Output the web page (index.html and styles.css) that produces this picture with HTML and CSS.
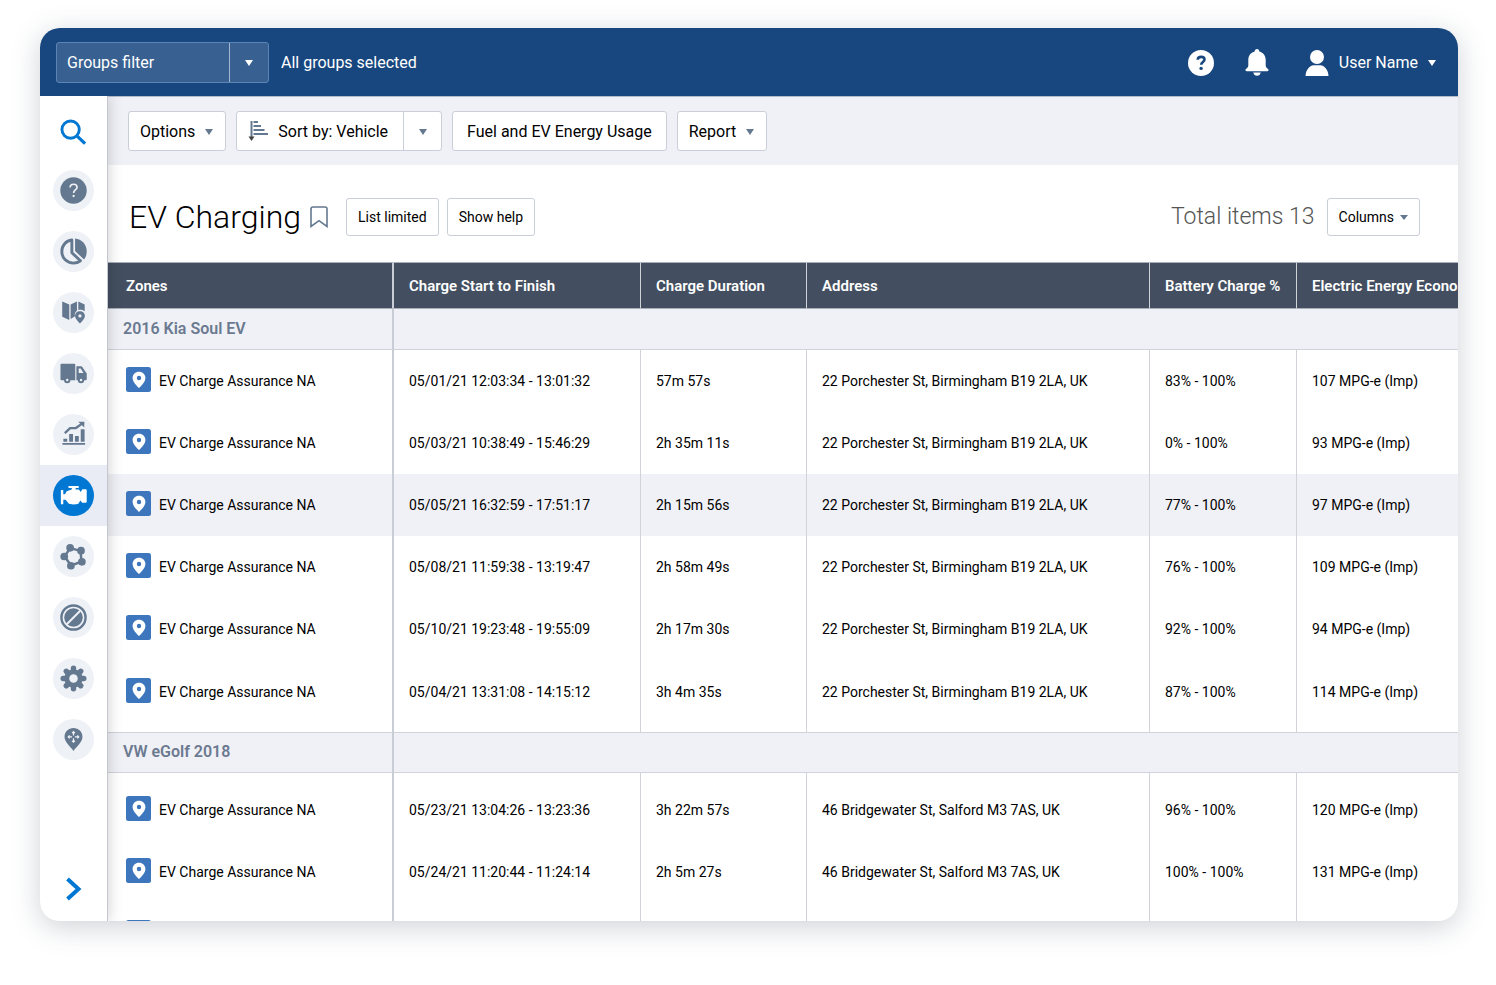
FILE: index.html
```html
<!DOCTYPE html>
<html lang="en">

<head>
    <meta charset="UTF-8">
    <meta name="viewport" content="width=device-width, initial-scale=1.0">
    <title>EV Charging</title>
    <link rel="stylesheet" href="styles.css">
</head>

<body>
    <!-- shared icon -->
    <svg class="symbols" aria-hidden="true">
        <symbol id="pin" viewBox="0 0 25 25">
            <rect width="25" height="25" rx="2.5" fill="#3d76bd"/>
            <path fill="#fff" fill-rule="evenodd" d="M13 4.800c-3.600 0-6.400 2.700-6.400 6.100 0 3.600 3.400 7 6.400 10.100 3-3.100 6.400-6.500 6.400-10.100 0-3.400-2.800-6.100-6.400-6.100zm0 4a2.200 2.200 0 1 1 0 4.400 2.200 2.200 0 0 1 0-4.400z"/>
        </symbol>
    </svg>

    <div class="window">
        <header class="topbar">
            <div class="groups-filter">
                <input type="text" placeholder="Groups filter" aria-label="Groups filter">
                <button type="button" aria-label="Open groups filter"><span class="caret"></span></button>
            </div>
            <span class="groups-status">All groups selected</span>
            <div class="topbar-actions">
                <button type="button" class="icon-button" aria-label="Help">
                    <svg width="26" height="26" viewBox="0 0 26 26">
                        <circle cx="13" cy="13" r="13" fill="#fff"/>
                        <path d="M9.700 9.800c.1-1.900 1.500-2.900 3.400-2.900 2 0 3.400 1 3.400 2.700 0 2.400-3.300 2.400-3.300 5.100" fill="none" stroke="#17477e" stroke-width="2.600"/>
                        <circle cx="13.100" cy="18.400" r="1.700" fill="#17477e"/>
                    </svg>
                </button>
                <button type="button" class="icon-button" aria-label="Notifications">
                    <svg width="24" height="28" viewBox="0 0 24 28" fill="#fff">
                        <path d="M12 0c1.400 0 2.300 1 2.300 2.400C18.300 3.400 20.700 6.500 20.700 11v5.500c0 2.500 2.900 3.200 2.900 4.600 0 .7-.5 1.100-1.200 1.100H1.600c-.7 0-1.200-.4-1.200-1.100 0-1.400 2.900-2.100 2.900-4.600V11C3.300 6.500 5.700 3.400 9.700 2.400 9.700 1 10.600 0 12 0z"/>
                        <path d="M8.200 23.500h7.600c-.5 2-1.900 3.300-3.800 3.300s-3.300-1.300-3.800-3.300z"/>
                    </svg>
                </button>
                <button type="button" class="user-button">
                    <svg width="24" height="26" viewBox="0 0 24 26" fill="#fff">
                        <circle cx="12" cy="7" r="7"/>
                        <path d="M.5 26c.3-6.600 4.600-10.700 8-10.700h7c3.400 0 7.700 4.100 8 10.700z"/>
                    </svg>
                    User Name
                    <span class="caret"></span>
                </button>
            </div>
        </header>

        <nav class="sidebar">
            <a href="#" class="search" aria-label="Search">
                <svg width="27" height="27" viewBox="0 0 28 28" fill="none" stroke="#0078d3" stroke-width="3">
                    <circle cx="11" cy="11" r="9"/>
                    <path d="M17.500 17.500l8.500 8" stroke-width="3.400"/>
                </svg>
            </a>
            <a href="#" class="nav-item" aria-label="Help">
                <span class="nav-icon"><svg width="27" height="27" viewBox="0 0 28 28">
                    <circle cx="14" cy="14" r="13.700" fill="#64788f"/>
                    <path d="M10.500 11c0-2.200 1.400-3.500 3.600-3.500s3.600 1.200 3.600 3.100c0 2.700-3.600 2.900-3.600 5.900" fill="none" stroke="#eef1f6" stroke-width="1.700"/>
                    <circle cx="14.100" cy="19.700" r="1.200" fill="#eef1f6"/>
                </svg></span>
            </a>
            <a href="#" class="nav-item" aria-label="Dashboard">
                <span class="nav-icon"><svg width="27" height="27" viewBox="0 0 28 28">
                    <path d="M12.300 2.100C6.200 2.800 1.900 7.700 1.900 14c0 6.900 5.400 12 12.100 12 2.800 0 5.300-.9 7.200-2.400l-8.900-8.300z" fill="none" stroke="#64788f" stroke-width="3" stroke-linejoin="round"/>
                    <path d="M15.600.6c6.900.6 12.100 6.200 12.100 13.200 0 3.400-1 6.100-2.800 8.400l-9.300-8.600z" fill="#64788f"/>
                </svg></span>
            </a>
            <a href="#" class="nav-item" aria-label="Map">
                <span class="nav-icon"><svg width="27" height="27" viewBox="0 0 28 28" fill="#64788f">
                    <path d="M2.300 2.600l7.300 3.200v16l-7.300-3.300zM11 5.800l6.600-3.200v9.600c-2 1.200-2.800 3.500-2 5.800L11 20.800zM19 2.600l6.600 3v7.200c-1.600-1.600-4.200-2.200-6.600-1.300z"/>
                    <path fill-rule="evenodd" d="M20.700 12.700c-3 0-5.100 2.100-5.100 4.800 0 3 2.800 5 5.100 7.900 2.300-2.900 5.100-4.900 5.100-7.900 0-2.700-2.100-4.800-5.100-4.800zm0 3.100a1.700 1.700 0 1 1 0 3.400 1.700 1.700 0 0 1 0-3.400z"/>
                </svg></span>
            </a>
            <a href="#" class="nav-item" aria-label="Vehicles">
                <span class="nav-icon"><svg width="27" height="27" viewBox="0 0 28 28">
                    <path d="M1.500 4h13.300c.6 0 1 .4 1 1v16H1.500c-.6 0-1-.4-1-1V5c0-.6.4-1 1-1z" fill="#64788f"/>
                    <path d="M17 6.500h4.600c.8 0 1.300.4 1.700 1l4.400 6.600V20c0 .6-.4 1-1 1H17z" fill="#64788f"/>
                    <path d="M19.400 8.700h2l3 4.800h-5z" fill="#eef1f6"/>
                    <g fill="#eef1f6" stroke="#64788f" stroke-width="2">
                        <circle cx="7.500" cy="20.700" r="2.300"/>
                        <circle cx="21.800" cy="20.700" r="2.300"/>
                    </g>
                </svg></span>
            </a>
            <a href="#" class="nav-item" aria-label="Activity">
                <span class="nav-icon"><svg width="27" height="27" viewBox="0 0 28 28" fill="#64788f">
                    <path d="M3.500 18.500h4v3h-4zM9.500 13.500h4v8h-4zM15.500 15.500h4v6h-4zM21.500 8.500h4v13h-4zM2.500 22.700h23.500v2H2.500z"/>
                    <path d="M5 12.500l5.500-5.200h6l6-4.300" fill="none" stroke="#64788f" stroke-width="2.400"/>
                    <path d="M19 .7l6.300 0-.2 6z"/>
                </svg></span>
            </a>
            <a href="#" class="nav-item active" aria-label="Engine and maintenance">
                <span class="nav-icon"><svg width="27" height="27" viewBox="0 0 28 28" fill="#fff">
                    <path d="M8.800 4.200h10.600v2.100h-3.200v1.500h3.300l2.100 2.500 1.500-2.900h3.700c.5 0 .9.400.9.900v12.200c0 .5-.4.900-.9.900H23l-1.800-2.300-2.400 3.600-5 .7-4.600-.9-3.400-4.200H3.400v4.700H.9V8.200h2.500v4.600h1.800l1.700-3.300 5.300-1.600V6.300H8.800z"/>
                </svg></span>
            </a>
            <a href="#" class="nav-item" aria-label="Zones and messages">
                <span class="nav-icon"><svg width="27" height="27" viewBox="0 0 28 28" fill="#64788f">
                    <path d="M10.500 5.300l10.800 2.900 1 11.100-10.800 4L4.700 14z" fill="none" stroke="#64788f" stroke-width="2.600"/>
                    <circle cx="10.500" cy="5" r="4"/>
                    <circle cx="21.800" cy="8" r="4"/>
                    <circle cx="22.700" cy="19.500" r="4"/>
                    <circle cx="11.300" cy="23.600" r="4"/>
                    <circle cx="4.400" cy="14" r="4"/>
                </svg></span>
            </a>
            <a href="#" class="nav-item" aria-label="Rules">
                <span class="nav-icon"><svg width="27" height="27" viewBox="0 0 28 28">
                    <circle cx="14" cy="14" r="12.500" fill="none" stroke="#64788f" stroke-width="2.500"/>
                    <circle cx="14" cy="14" r="9.600" fill="#64788f"/>
                    <path d="M7 21L21 7" stroke="#eef1f6" stroke-width="2"/>
                </svg></span>
            </a>
            <a href="#" class="nav-item" aria-label="Administration">
                <span class="nav-icon"><svg width="27" height="27" viewBox="0 0 28 28">
                    <g stroke="#64788f" stroke-width="5.600" stroke-linecap="round">
                        <path d="M14 3.300v21.400M3.300 14h21.400M6.500 6.500l15 15M21.500 6.500l-15 15"/>
                    </g>
                    <circle cx="14" cy="14" r="9.500" fill="#64788f"/>
                    <circle cx="14" cy="14" r="4.400" fill="#eef1f6"/>
                </svg></span>
            </a>
            <a href="#" class="nav-item" aria-label="Places">
                <span class="nav-icon"><svg width="27" height="27" viewBox="0 0 28 28">
                    <path d="M14 2.200c-5.200 0-9.300 3.900-9.300 9 0 5.500 5.700 9.600 9.300 14.700 3.600-5.100 9.300-9.200 9.300-14.700 0-5.100-4.100-9-9.300-9z" fill="#64788f"/>
                    <path d="M14 6v3.800M14 12.800v3.800M8.700 11.300h3.800M15.500 11.300h3.800M12.500 7.300L14 5.800l1.500 1.500M12.500 15.300l1.500 1.500 1.500-1.500M10 9.800l-1.500 1.500 1.500 1.500M18 9.800l1.500 1.500-1.500 1.500" fill="none" stroke="#eef1f6" stroke-width="1.200"/>
                </svg></span>
            </a>
            <button type="button" class="expand" aria-label="Expand menu">
                <svg width="16" height="24" viewBox="0 0 16 24" fill="none" stroke="#0078d3" stroke-width="4">
                    <path d="M1.500 2l11 10-11 10"/>
                </svg>
            </button>
        </nav>

        <main class="content">
            <div class="toolbar">
                <button type="button" class="btn">Options <span class="caret"></span></button>
                <div class="split-button">
                    <button type="button" class="btn">
                        <svg width="20" height="22" viewBox="0 0 20 22">
                            <path d="M3.500 1v16" stroke="#64788f" stroke-width="2"/>
                            <path d="M.5 16.500h6L3.500 21z" fill="#444"/>
                            <path d="M5.500 2h4.500M5.500 6h7.500M5.500 10h11M5.500 14h14.500" stroke="#64788f" stroke-width="2"/>
                        </svg>
                        Sort by: Vehicle
                    </button>
                    <button type="button" class="btn split-toggle" aria-label="Choose sort order"><span class="caret"></span></button>
                </div>
                <button type="button" class="btn wide">Fuel and EV Energy Usage</button>
                <button type="button" class="btn">Report <span class="caret"></span></button>
            </div>

            <div class="title-row">
                <h1>EV Charging</h1>
                <button type="button" class="icon-button bookmark" aria-label="Bookmark this page">
                    <svg width="18" height="22" viewBox="0 0 18 22" fill="none" stroke="#64788f" stroke-width="1.600">
                        <path d="M1 20.500V3c0-1.200.9-2 2-2h12c1.100 0 2 .8 2 2v17.500l-8-5.800z"/>
                    </svg>
                </button>
                <button type="button" class="btn small">List limited</button>
                <button type="button" class="btn small">Show help</button>
                <span class="total">Total items 13</span>
                <button type="button" class="btn small columns">Columns <span class="caret"></span></button>
            </div>

            <div class="table-wrap">
                <table>
                    <colgroup>
                        <col class="col-zones">
                        <col class="col-period">
                        <col class="col-duration">
                        <col class="col-address">
                        <col class="col-battery">
                        <col>
                    </colgroup>
                    <thead>
                        <tr>
                            <th scope="col">Zones</th>
                            <th scope="col">Charge Start to Finish</th>
                            <th scope="col">Charge Duration</th>
                            <th scope="col">Address</th>
                            <th scope="col">Battery Charge %</th>
                            <th scope="col">Electric Energy Economy</th>
                        </tr>
                    </thead>
                    <tbody>
                        <tr class="group">
                            <th scope="rowgroup">2016 Kia Soul EV</th>
                            <td colspan="5"></td>
                        </tr>
                        <tr>
                            <td><svg class="pin"><use href="#pin"/></svg>EV Charge Assurance NA</td>
                            <td>05/01/21 12:03:34 - 13:01:32</td>
                            <td>57m 57s</td>
                            <td>22 Porchester St, Birmingham B19 2LA, UK</td>
                            <td>83% - 100%</td>
                            <td>107 MPG-e (Imp)</td>
                        </tr>
                        <tr>
                            <td><svg class="pin"><use href="#pin"/></svg>EV Charge Assurance NA</td>
                            <td>05/03/21 10:38:49 - 15:46:29</td>
                            <td>2h 35m 11s</td>
                            <td>22 Porchester St, Birmingham B19 2LA, UK</td>
                            <td>0% - 100%</td>
                            <td>93 MPG-e (Imp)</td>
                        </tr>
                        <tr class="highlight">
                            <td><svg class="pin"><use href="#pin"/></svg>EV Charge Assurance NA</td>
                            <td>05/05/21 16:32:59 - 17:51:17</td>
                            <td>2h 15m 56s</td>
                            <td>22 Porchester St, Birmingham B19 2LA, UK</td>
                            <td>77% - 100%</td>
                            <td>97 MPG-e (Imp)</td>
                        </tr>
                        <tr>
                            <td><svg class="pin"><use href="#pin"/></svg>EV Charge Assurance NA</td>
                            <td>05/08/21 11:59:38 - 13:19:47</td>
                            <td>2h 58m 49s</td>
                            <td>22 Porchester St, Birmingham B19 2LA, UK</td>
                            <td>76% - 100%</td>
                            <td>109 MPG-e (Imp)</td>
                        </tr>
                        <tr>
                            <td><svg class="pin"><use href="#pin"/></svg>EV Charge Assurance NA</td>
                            <td>05/10/21 19:23:48 - 19:55:09</td>
                            <td>2h 17m 30s</td>
                            <td>22 Porchester St, Birmingham B19 2LA, UK</td>
                            <td>92% - 100%</td>
                            <td>94 MPG-e (Imp)</td>
                        </tr>
                        <tr class="last">
                            <td><svg class="pin"><use href="#pin"/></svg>EV Charge Assurance NA</td>
                            <td>05/04/21 13:31:08 - 14:15:12</td>
                            <td>3h 4m 35s</td>
                            <td>22 Porchester St, Birmingham B19 2LA, UK</td>
                            <td>87% - 100%</td>
                            <td>114 MPG-e (Imp)</td>
                        </tr>
                    </tbody>
                    <tbody>
                        <tr class="group">
                            <th scope="rowgroup">VW eGolf 2018</th>
                            <td colspan="5"></td>
                        </tr>
                        <tr class="first">
                            <td><svg class="pin"><use href="#pin"/></svg>EV Charge Assurance NA</td>
                            <td>05/23/21 13:04:26 - 13:23:36</td>
                            <td>3h 22m 57s</td>
                            <td>46 Bridgewater St, Salford M3 7AS, UK</td>
                            <td>96% - 100%</td>
                            <td>120 MPG-e (Imp)</td>
                        </tr>
                        <tr>
                            <td><svg class="pin"><use href="#pin"/></svg>EV Charge Assurance NA</td>
                            <td>05/24/21 11:20:44 - 11:24:14</td>
                            <td>2h 5m 27s</td>
                            <td>46 Bridgewater St, Salford M3 7AS, UK</td>
                            <td>100% - 100%</td>
                            <td>131 MPG-e (Imp)</td>
                        </tr>
                        <tr>
                            <td><svg class="pin"><use href="#pin"/></svg></td>
                            <td></td>
                            <td></td>
                            <td></td>
                            <td></td>
                            <td></td>
                        </tr>
                    </tbody>
                </table>
            </div>
        </main>
    </div>
</body>

</html>
```
FILE: styles.css
```css
* {
    box-sizing: border-box;
}

body {
    margin: 0;
    padding: 28px 38px 64px 40px;
    height: 100vh;
    background-color: #fff;
    color: #000;
    font-family: Roboto, Arial, sans-serif;
    font-size: 14px;
}

button,
input {
    font: inherit;
    color: inherit;
    margin: 0;
}

button {
    cursor: pointer;
}

svg {
    display: block;
    flex-shrink: 0;
}

.symbols {
    position: absolute;
    width: 0;
    height: 0;
}

.window {
    display: grid;
    grid-template-columns: 68px minmax(0, 1fr);
    grid-template-rows: 68px minmax(0, 1fr);
    height: 100%;
    overflow: hidden;
    border-radius: 20px;
    background-color: #fff;
    box-shadow: 0 6px 28px rgba(60, 75, 95, 0.25);
}

.caret {
    width: 0;
    height: 0;
    margin-top: 1px;
    border: 4px solid transparent;
    border-top: 6px solid #64788f;
    border-bottom: 0;
}

.icon-button {
    padding: 0;
    border: 0;
    background: none;
}

/* top bar */
.topbar {
    grid-column: 1 / 3;
    z-index: 2;
    display: flex;
    align-items: center;
    padding: 0 22px 0 16px;
    background-color: #17477e;
    color: #fff;
    font-size: 16px;
}

.topbar .caret {
    border-top-color: #fff;
}

.groups-filter {
    display: flex;
    width: 213px;
    height: 41px;
    border: 1px solid #5c85b5;
    border-radius: 3px;
    background-color: #386192;
}

.groups-filter input {
    flex: 1;
    min-width: 0;
    padding: 0 10px;
    border: 0;
    background: none;
}

.groups-filter input::placeholder {
    color: #fff;
    opacity: 1;
}

.groups-filter button {
    display: flex;
    align-items: center;
    justify-content: center;
    width: 39px;
    padding: 0;
    border: 0;
    border-left: 1px solid #a3b6cf;
    background: none;
}

.groups-status {
    margin-left: 12px;
}

.topbar-actions {
    display: flex;
    align-items: center;
    gap: 31px;
    margin-left: auto;
}

.topbar-actions svg {
    margin-top: 2px;
}

.user-button {
    display: flex;
    align-items: center;
    gap: 10px;
    margin-left: 5px;
    padding: 0;
    border: 0;
    background: none;
}

/* side navigation */
.sidebar {
    z-index: 1;
    display: flex;
    flex-direction: column;
    border-right: 1px solid #c4c7d0;
    background-color: #fff;
    box-shadow: 0 0 14px rgba(0, 0, 0, 0.2);
}

.search {
    display: flex;
    align-items: center;
    justify-content: center;
    height: 64px;
    padding-top: 8px;
}

.nav-item {
    display: flex;
    align-items: center;
    justify-content: center;
    height: 61px;
}

.nav-icon {
    display: flex;
    align-items: center;
    justify-content: center;
    width: 41px;
    height: 41px;
    border-radius: 50%;
    background-color: #eef1f6;
}

.nav-item.active {
    background-color: #e9ecf4;
}

.nav-item.active .nav-icon {
    background-color: #0078d3;
}

.expand {
    display: flex;
    justify-content: center;
    margin-top: auto;
    padding: 0 0 20px;
    border: 0;
    background: none;
}

/* toolbar */
.content {
    display: flex;
    flex-direction: column;
    min-width: 0;
}

.toolbar {
    display: flex;
    align-items: center;
    gap: 10px;
    height: 69px;
    padding: 0 20px;
    border-top: 1px solid #b4bccc;
    background-color: #f0f1f6;
    font-size: 16px;
}

.btn {
    display: flex;
    align-items: center;
    gap: 10px;
    height: 40px;
    padding: 0 12px 0 11px;
    border: 1px solid #c9ced8;
    border-radius: 3px;
    background-color: #fff;
    white-space: nowrap;
}

.btn.small {
    height: 38px;
    padding: 0 11px;
}

.btn.wide {
    padding: 0 14px;
}

.split-button {
    display: flex;
}

.split-button .btn:first-child {
    border-radius: 3px 0 0 3px;
    padding-right: 15px;
}

.split-button .split-toggle {
    justify-content: center;
    width: 39px;
    margin-left: -1px;
    padding: 0;
    border-radius: 0 3px 3px 0;
}

/* title */
.title-row {
    display: flex;
    align-items: center;
    height: 97px;
    padding: 6px 38px 0 21px;
}

h1 {
    margin: 0;
    font-size: 32px;
    font-weight: 300;
    line-height: 40px;
}

.bookmark {
    margin: 0 18px 0 9px;
}

.title-row .small + .small {
    margin-left: 8px;
}

.total {
    margin-left: auto;
    color: #555;
    font-size: 23px;
    font-weight: 300;
}

.btn.columns {
    gap: 6px;
    margin-left: 12px;
}

.columns .caret {
    border-top-width: 5px;
}

/* table */
.table-wrap {
    flex: 1;
    min-height: 0;
    overflow: hidden;
}

table {
    width: 100%;
    min-width: 1300px;
    table-layout: fixed;
    border-collapse: separate;
    border-spacing: 0;
}

.col-zones {
    width: 286px;
}

.col-period {
    width: 247px;
}

.col-duration {
    width: 166px;
}

.col-address {
    width: 343px;
}

.col-battery {
    width: 147px;
}

th,
td {
    height: 62px;
    padding: 0 0 0 15px;
    border-right: 1px solid #d0d3da;
    overflow: hidden;
    text-align: left;
    white-space: nowrap;
}

th:first-child,
td:first-child {
    border-right: 2px solid #c9cdd6;
}

th:last-child,
td:last-child {
    border-right: 0;
}

td:first-child {
    padding: 0 0 4px 18px;
}

thead th {
    height: 47px;
    border-top: 1px solid #a9b0ba;
    border-bottom: 1px solid #a9b0ba;
    background-color: #434f60;
    color: #fff;
    font-size: 15px;
    font-weight: 600;
}

thead th:first-child {
    padding-left: 18px;
}

.group th,
.group td {
    height: 41px;
    padding-bottom: 2px;
    border-bottom: 1px solid #d0d3da;
    background-color: #f0f1f6;
}

.group th {
    color: #6b7a90;
    font-size: 16px;
    font-weight: 600;
}

tbody + tbody .group th,
tbody + tbody .group td {
    border-top: 1px solid #d0d3da;
}

.highlight td {
    background-color: #f0f1f6;
}

.first td {
    height: 68px;
    padding-top: 6px;
}

.last td {
    height: 72px;
    padding-bottom: 8px;
}

.last td:first-child {
    padding-bottom: 12px;
}

.pin {
    display: inline-block;
    width: 25px;
    height: 25px;
    margin-right: 8px;
    vertical-align: -6px;
}
```
